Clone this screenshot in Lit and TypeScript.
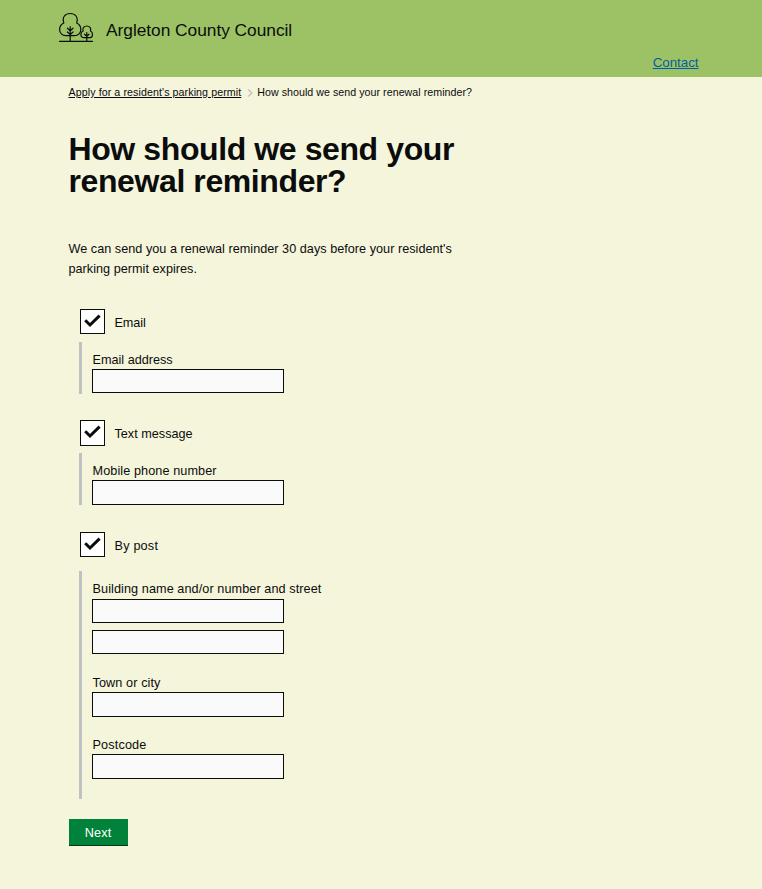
import { LitElement, html, css, svg, nothing } from "lit";
import { customElement, property } from "lit/decorators.js";
import { styleMap } from "lit/directives/style-map.js";

interface Field { label: string; boxes: number[]; gap: number; tracking: number; leading?: number; }
interface Option { name: string; box: number; top: number; offset: number; height: number; padding: number; tracking: number; fields: Field[]; }

const options: Option[] = [
  { name: "Email", box: 25, top: 0, offset: 8, height: 52, padding: 7, tracking: -0.1,
    fields: [{ label: "Email address", boxes: [24], gap: 0, tracking: 0 }] },
  { name: "Text message", box: 26, top: 26, offset: 7, height: 52, padding: 7, tracking: 0,
    fields: [{ label: "Mobile phone number", boxes: [25], gap: 0, tracking: 0.09 }] },
  { name: "By post", box: 25, top: 27, offset: 14, height: 228, padding: 8, tracking: 0.2,
    fields: [
      { label: "Building name and/or number and street", boxes: [24, 24], gap: 0, tracking: 0.08, leading: 20 },
      { label: "Town or city", boxes: [25], gap: 18, tracking: 0.1 },
      { label: "Postcode", boxes: [25], gap: 17, tracking: 0.15 },
    ] },
];

@customElement("text-field")
export class TextField extends LitElement {
  @property() label = "";
  @property({ type: Number }) tracking = 0;
  @property({ type: Number }) leading = 22;
  @property({ attribute: false }) boxes: number[] = [];

  static styles = css`
    :host { display: block; }
    .label { display: block; box-sizing: border-box; height: 20px; padding-left: 0.5px; white-space: nowrap; }
    .input { display: block; box-sizing: border-box; width: 192px; margin: 0 0 7px; padding: 2px 4px;
      border: 1px solid #0b0c0c; border-radius: 0; background: #fafafa; font: inherit; outline: none; }
    .input:last-child { margin-bottom: 0; }
  `;

  render() {
    return html`<label class="label" for="box0" style=${styleMap({ letterSpacing: `${this.tracking}px`, lineHeight: `${this.leading}px` })}>${this.label}</label>
      ${this.boxes.map((h, i) => html`<input class="input" id="box${i}" type="text" aria-label=${this.label} style=${styleMap({ height: `${h}px` })}>`)}`;
  }
}

@customElement("app-root")
export class AppRoot extends LitElement {
  static styles = css`
    :host { display: block; min-height: 889px; background: #f5f5dc; color: #0b0c0c;
      font-family: "Liberation Sans", Arial, Helvetica, sans-serif; font-size: 12.67px; line-height: 20px; }
    .header { height: 77px; box-sizing: border-box; padding: 12px 63px 0 58px; background: #9dc266; }
    .brand { display: flex; height: 36px; align-items: center; }
    .logo { display: block; width: 36px; height: 31px; align-self: flex-start; }
    .name { margin-left: 12px; font-size: 17.33px; letter-spacing: -0.03px; }
    .nav { display: flex; justify-content: flex-end; margin-top: 5px; line-height: 20px; }
    .contact { color: #005ea5; font-size: 13.33px; letter-spacing: -0.02px; margin-right: 0.5px; text-decoration: underline; }
    .main { padding: 0 68.5px; }
    .crumbs { display: flex; height: 16px; padding-top: 7px; align-items: center; font-size: 10.67px; line-height: 16px; }
    .crumb { color: inherit; letter-spacing: 0.085px; text-underline-offset: 1px; }
    .current { letter-spacing: 0.035px; }
    .chevron { width: 6px; height: 8px; margin: 1px 4.5px 0 5.5px; }
    .title { width: 410px; margin: 33px 0 0; font-size: 32px; line-height: 32px; font-weight: 700; letter-spacing: -0.4px; }
    .intro { width: 400px; margin: 42px 0 0; letter-spacing: 0.02px; }
    .form { margin-top: 30px; }
    .option { display: flex; align-items: flex-start; margin-left: 11.5px; }
    .check { display: block; box-sizing: border-box; width: 25px; border: 1px solid #0b0c0c; background: #fff; }
    .tick { display: block; width: 23px; height: 23px; }
    .option-name { margin: 4px 0 0 9.5px; line-height: 20px; }
    .reveal { box-sizing: border-box; margin-left: 10.5px; padding-left: 10px; border-left: 3px solid #bfc1c3; }
    .next { display: block; width: 59px; height: 27px; margin-top: 20px; padding: 2px 0 0; border: 0;
      border-bottom: 1px solid #003618; border-radius: 0; background: #00823b; color: #fff;
      font: inherit; line-height: 24px; letter-spacing: 0.15px; }
  `;

  private logo() {
    return svg`<svg class="logo" viewBox="0 0 36 31" fill="none" stroke="#0b0c0c" stroke-width="1.2" stroke-linecap="round" stroke-linejoin="round">
      <path d="M1.5 29.4H34.5M12.2 29V14.5M9.4 16.2L12.2 18.8L15 16.2M9.4 20L12.2 22.6L15 20"/>
      <path d="M8.2 23.6C4.1 23.8 1.6 20.8 1.6 17.5C1.6 14.6 3 12.3 5.8 11C3.8 5 7.3 1.5 12.2 1.5C17.2 1.5 20.5 5 18.7 11C21.4 12.3 22.8 14.6 22.8 17.5C22.8 20.8 20.3 23.8 16.2 23.6Z"/>
      <path d="M28.8 29V20.5M26.6 22.2L28.8 24.2L31 22.2"/>
      <path d="M26.2 25.7C23.8 25.6 22.9 24 22.9 22.4C22.9 20.7 23.8 19.5 25.1 19C24.2 15.9 26 14 28.8 14C31.6 14 33.3 15.9 32.5 19C33.8 19.5 34.5 20.8 34.5 22.4C34.5 24.2 33.3 25.7 31.2 25.7Z"/>
    </svg>`;
  }

  private option(o: Option) {
    return html`
      <div class="option" style=${styleMap({ marginTop: `${o.top}px` })}>
        <span class="check" role="checkbox" aria-checked="true" aria-label=${o.name} style=${styleMap({ height: `${o.box}px` })}>
          <svg class="tick" viewBox="0 0 23 23"><path d="M4.2 10.3L9 15L18.6 5.6" fill="none" stroke="#0b0c0c" stroke-width="3"/></svg>
        </span>
        <span class="option-name" style=${styleMap({ letterSpacing: `${o.tracking}px` })}>${o.name}</span>
      </div>
      <div class="reveal" style=${styleMap({ marginTop: `${o.offset}px`, height: `${o.height}px`, paddingTop: `${o.padding}px` })}>
        ${o.fields.map(f => html`<text-field .label=${f.label} .tracking=${f.tracking} .leading=${f.leading ?? 22} .boxes=${f.boxes} style=${f.gap ? styleMap({ paddingTop: `${f.gap}px` }) : nothing}></text-field>`)}
      </div>`;
  }

  render() {
    return html`
      <header class="header">
        <div class="brand">${this.logo()}<span class="name">Argleton County Council</span></div>
        <nav class="nav"><a class="contact" href="#">Contact</a></nav>
      </header>
      <main class="main">
        <nav class="crumbs">
          <a class="crumb" href="#">Apply for a resident's parking permit</a>
          <svg class="chevron" viewBox="0 0 6 8"><path d="M1.2 0.6L4.8 4L1.2 7.4" fill="none" stroke="#bfc1c3" stroke-width="1.4"/></svg>
          <span class="current">How should we send your renewal reminder?</span>
        </nav>
        <h1 class="title">How should we send your renewal reminder?</h1>
        <p class="intro">We can send you a renewal reminder 30 days before your resident's parking permit expires.</p>
        <div class="form">${options.map(o => this.option(o))}
          <button class="next" type="button">Next</button>
        </div>
      </main>`;
  }
}
